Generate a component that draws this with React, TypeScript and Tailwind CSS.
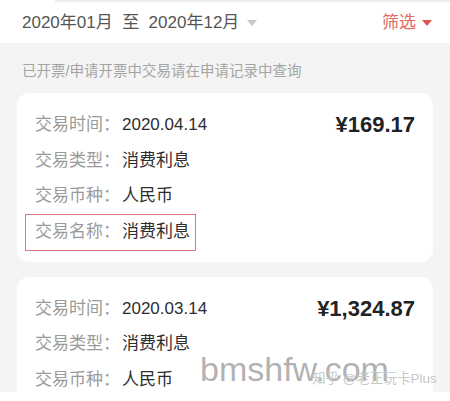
type Txn = {
  time: string;
  type: string;
  currency: string;
  name?: string;
  amount: string;
};

const txns: Txn[] = [
  { time: "2020.04.14", type: "消费利息", currency: "人民币", name: "消费利息", amount: "¥169.17" },
  { time: "2020.03.14", type: "消费利息", currency: "人民币", amount: "¥1,324.87" },
];

function Caret({ className }: { className: string }) {
  return (
    <svg viewBox="0 0 10 6" className={className}>
      <path d="M0 0h10L5 6z" fill="currentColor" />
    </svg>
  );
}

function Row({ label, value, marked }: { label: string; value: string; marked?: boolean }) {
  return (
    <div
      className={
        marked
          ? "flex items-center h-[37px] -ml-[10px] pl-[9px] w-[171px] border-[1.5px] border-[#d9777a]"
          : "flex items-center h-[35.5px]"
      }
    >
      <span className="w-[87px] text-[#9a9a9a]">{label}</span>
      <span className="text-[#2e2e2e]">{value}</span>
    </div>
  );
}

function TxnCard({ t }: { t: Txn }) {
  return (
    <div className="bg-white rounded-[12px] mx-[17px] px-[18px] pt-[14px] pb-[11px] relative">
      <div className="absolute right-[18px] top-[21px] text-[22px] font-bold text-[#222] leading-none">
        {t.amount}
      </div>
      <Row label="交易时间：" value={t.time} />
      <Row label="交易类型：" value={t.type} />
      <Row label="交易币种：" value={t.currency} />
      {t.name && <Row label="交易名称：" value={t.name} marked />}
    </div>
  );
}

export default function App() {
  return (
    <div
      className="w-[450px] h-[401px] overflow-hidden bg-[#f4f4f4] relative text-[17px]"
      style={{ fontFamily: '"Liberation Sans", "Noto Sans CJK SC", sans-serif' }}
    >
      <div className="bg-white">
        <div className="h-[2px] ml-[55px] bg-[#eeeeee]" />
        <div className="h-[41px] flex items-center pl-[22px] pr-[18px]">
          <span className="text-[17px] text-[#555]">2020年01月&nbsp;&nbsp;至&nbsp;&nbsp;2020年12月</span>
          <Caret className="w-[10px] h-[6px] ml-[8px] text-[#c8c8c8]" />
          <span className="ml-auto text-[17px] text-[#e06a60]">筛选</span>
          <Caret className="w-[10px] h-[6px] ml-[6px] text-[#e0544c]" />
        </div>
      </div>

      <div className="h-[50px] flex items-center pt-[8px] pl-[22px] text-[14.5px] text-[#a4a4a4]">
        已开票/申请开票中交易请在申请记录中查询
      </div>

      <div className="flex flex-col gap-[15px]">
        {txns.map((t) => (
          <TxnCard key={t.time} t={t} />
        ))}
      </div>

      <div className="absolute left-0 right-0 bottom-0 h-[9px] bg-white" />

      {/* site watermark */}
      <div className="absolute left-[200px] top-[352px] text-[34px] text-[#9d9d9d]/80 leading-none">
        bmshfw.com
      </div>
      <div className="absolute left-[312px] top-[372px] text-[13.5px] text-[#c8c8c8] leading-none">
        知乎 @老正玩卡Plus
      </div>
    </div>
  );
}
